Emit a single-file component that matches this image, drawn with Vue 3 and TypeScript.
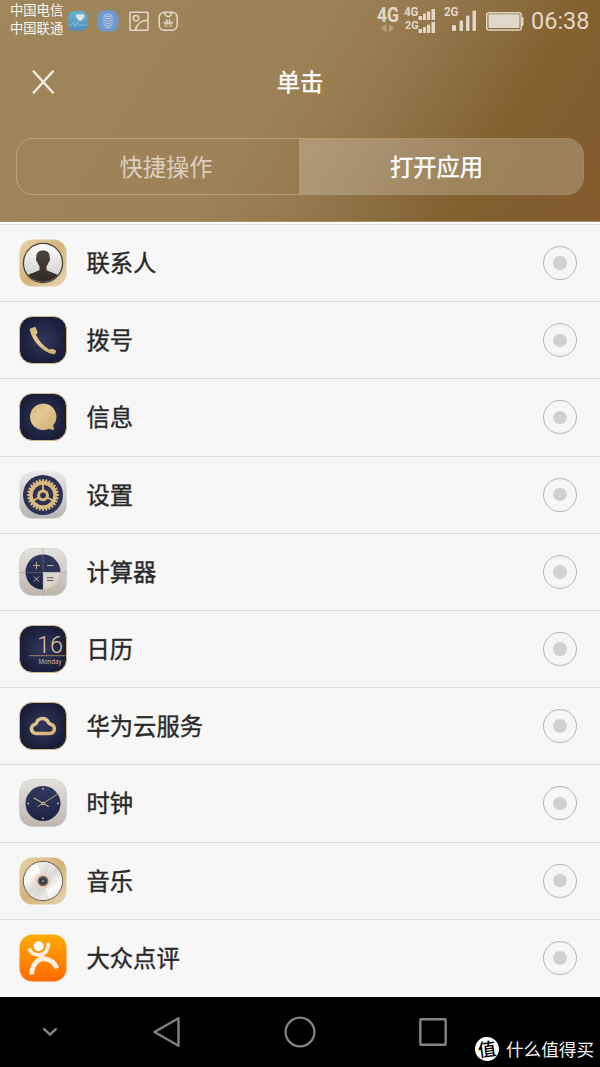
<script setup lang="ts">
import { ref, computed } from 'vue'

type IconName =
  | 'contacts'
  | 'phone'
  | 'message'
  | 'settings'
  | 'calculator'
  | 'calendar'
  | 'cloud'
  | 'clock'
  | 'music'
  | 'dianping'

interface AppItem {
  icon: IconName
  label: string
}

const tabs = ['快捷操作', '打开应用']
const activeTab = ref(1)
const selected = ref<IconName | null>(null)

const apps: AppItem[] = [
  { icon: 'contacts', label: '联系人' },
  { icon: 'phone', label: '拨号' },
  { icon: 'message', label: '信息' },
  { icon: 'settings', label: '设置' },
  { icon: 'calculator', label: '计算器' },
  { icon: 'calendar', label: '日历' },
  { icon: 'cloud', label: '华为云服务' },
  { icon: 'clock', label: '时钟' },
  { icon: 'music', label: '音乐' },
  { icon: 'dianping', label: '大众点评' }
]

// background tile of each icon
const tiles: Record<IconName, string> = {
  contacts: 'gold',
  phone: 'navy',
  message: 'navy',
  settings: 'silver',
  calculator: 'stone',
  calendar: 'navy',
  cloud: 'navy',
  clock: 'stone',
  music: 'gold',
  dianping: 'orange'
}

// gear outline, 28 teeth
const gearPath = computed(() => {
  const teeth = 28
  const points: string[] = []
  for (let i = 0; i < teeth; i++) {
    const base = (i / teeth) * Math.PI * 2
    const steps: [number, number][] = [
      [-0.08, 14],
      [-0.06, 15.9],
      [0.06, 15.9],
      [0.08, 14]
    ]
    for (const [offset, r] of steps) {
      const x = 24 + Math.cos(base + offset) * r
      const y = 24 + Math.sin(base + offset) * r
      points.push(`${x.toFixed(2)} ${y.toFixed(2)}`)
    }
  }
  return `M${points.join('L')}Z`
})
</script>

<template>
  <div class="screen">
    <!-- shared gradients -->
    <svg class="defs" width="0" height="0">
      <defs>
        <linearGradient id="gold" x1="0" y1="0" x2="1" y2="1">
          <stop offset="0" stop-color="#e8d3ab" />
          <stop offset="0.5" stop-color="#d3b57a" />
          <stop offset="1" stop-color="#e9d5b2" />
        </linearGradient>
        <radialGradient id="navy">
          <stop offset="0" stop-color="#30365a" />
          <stop offset="0.55" stop-color="#252a4b" />
          <stop offset="1" stop-color="#191d38" />
        </radialGradient>
        <linearGradient id="silver" x1="0" y1="0" x2="0" y2="1">
          <stop offset="0" stop-color="#e8e8e8" />
          <stop offset="1" stop-color="#b5b5b5" />
        </linearGradient>
        <linearGradient id="stone" x1="0" y1="0" x2="0" y2="1">
          <stop offset="0" stop-color="#e3e2dc" />
          <stop offset="1" stop-color="#bdb6af" />
        </linearGradient>
        <linearGradient id="orange" x1="0" y1="0" x2="0" y2="1">
          <stop offset="0" stop-color="#ffab02" />
          <stop offset="1" stop-color="#ff6900" />
        </linearGradient>
        <linearGradient id="goldInk" x1="0" y1="0" x2="1" y2="1">
          <stop offset="0" stop-color="#d8b87c" />
          <stop offset="0.4" stop-color="#e3c993" />
          <stop offset="1" stop-color="#cfac70" />
        </linearGradient>
        <linearGradient id="face" x1="0" y1="0" x2="0" y2="1">
          <stop offset="0" stop-color="#323a60" />
          <stop offset="1" stop-color="#1d2242" />
        </linearGradient>
        <linearGradient id="portrait" x1="0" y1="0" x2="0" y2="1">
          <stop offset="0" stop-color="#fff" />
          <stop offset="1" stop-color="#c9c9c9" />
        </linearGradient>
        <linearGradient id="body" x1="0" y1="0" x2="0" y2="1">
          <stop offset="0" stop-color="#4b453e" />
          <stop offset="1" stop-color="#2e2721" />
        </linearGradient>
        <linearGradient id="disc" x1="0.1" y1="0" x2="0.9" y2="1">
          <stop offset="0" stop-color="#e9e8e4" />
          <stop offset="0.25" stop-color="#fdfdfb" />
          <stop offset="0.5" stop-color="#dad8d3" />
          <stop offset="0.75" stop-color="#fbfbf9" />
          <stop offset="1" stop-color="#dddcd8" />
        </linearGradient>
        <linearGradient id="health" x1="0" y1="0" x2="0" y2="1">
          <stop offset="0" stop-color="#5fb4d3" />
          <stop offset="1" stop-color="#5689b9" />
        </linearGradient>
        <clipPath id="portraitClip"><circle cx="24" cy="24" r="19" /></clipPath>
      </defs>
    </svg>

    <header class="header">
      <div class="status">
        <div class="carriers">
          <span>中国电信</span>
          <span>中国联通</span>
        </div>
        <div class="notices">
          <svg width="20" height="20" viewBox="0 0 20 20">
            <rect x="0.5" y="0" width="19" height="20" rx="6" fill="url(#health)" />
            <path d="M12.2 10.2C9.2 8 7.900 6.600 8.100 4.900c.2-2.100 2.900-2.500 4.100-.8 1.200-1.700 3.900-1.300 4.100.8.2 1.700-1.100 3.100-4.100 5.300Z" fill="#e6e4da" />
            <path d="M0.500 14h3.500l1.500-2.500 2 4.500 1.800-5.500 2 5 1.500-1.500h6.500" fill="none" stroke="#8cc8e2" stroke-width="0.800" />
          </svg>
          <svg width="22" height="22" viewBox="0 0 22 22">
            <rect x="0.500" y="0.500" width="21" height="21" rx="7" fill="#6f97d0" />
            <g fill="none" stroke="#b9cbe0" stroke-width="1">
              <path d="M7 5.500q4-2.600 8 0M6 7.700q5 2.400 10 0M5.700 10q5.300 2.400 10.600 0M5.700 12.300q5.300 2.400 10.600 0M6.500 14.600q4.500 2.200 9 0M8 16.800q3 1.500 6 0M7.300 6q3.700 2 7.400 0" />
            </g>
          </svg>
          <svg width="20" height="20" viewBox="0 0 20 20" fill="none" stroke="#e2d8ca" stroke-width="1.500">
            <rect x="1" y="1.200" width="18" height="18" rx="0.500" />
            <circle cx="7" cy="7.200" r="2.700" />
            <path d="M6.500 19Q8 10 19 9" />
          </svg>
          <svg width="20" height="20" viewBox="0 0 20 20" fill="none" stroke="#e2d8ca" stroke-width="1.500">
            <rect x="1.200" y="1.200" width="18" height="18" rx="5" />
            <path d="M6.700 1.700q.7 4 3.500 4t3.500-4" />
            <g fill="#e2d8ca" stroke="none">
              <ellipse cx="9" cy="10.800" rx="1" ry="2.800" transform="rotate(-10 9 10.800)" />
              <ellipse cx="11.400" cy="10.800" rx="1" ry="2.800" transform="rotate(10 11.400 10.800)" />
              <ellipse cx="7" cy="12" rx="0.900" ry="2.200" transform="rotate(-38 7 12)" />
              <ellipse cx="13.400" cy="12" rx="0.900" ry="2.200" transform="rotate(38 13.400 12)" />
              <rect x="6.400" y="14.400" width="3" height="1" />
              <rect x="11" y="14.400" width="3" height="1" />
            </g>
          </svg>
        </div>

        <svg class="signals" width="150" height="36" viewBox="375 0 150 36">
          <g fill="#e2d8ca" font-weight="700">
            <text x="377" y="22" font-size="20" textLength="22" lengthAdjust="spacingAndGlyphs">4G</text>
            <text x="404" y="16" font-size="12" textLength="14.500" lengthAdjust="spacingAndGlyphs">4G</text>
            <text x="405" y="29" font-size="11" textLength="13.500" lengthAdjust="spacingAndGlyphs">2G</text>
            <text x="444" y="16" font-size="12" textLength="14.500" lengthAdjust="spacingAndGlyphs">2G</text>
          </g>
          <path d="M386.500 24v8.500l-5.500-4.200ZM389 24v8.500l5.500-4.200Z" fill="#b59f7d" />
          <g fill="#e2d8ca">
            <path d="M418.500 16h3.500v4h-3.500ZM423 13.500h3v6.500h-3ZM427 11.500h3.200v8.500h-3.200ZM431.500 9h3.500v11h-3.500Z" />
            <path d="M418.500 29h3.500v4h-3.500ZM423 27h3v6h-3ZM427 24.800h3.200v8.200h-3.200ZM431.500 22h3.500v11h-3.500Z" />
            <rect x="452" y="25" width="4" height="6" rx="1" />
            <rect x="459.500" y="20.500" width="3.500" height="10.500" rx="1" />
            <rect x="466" y="15.500" width="3.500" height="15.500" rx="1" />
            <rect x="472.500" y="10.500" width="3.500" height="20.500" rx="1" />
            <rect x="488.500" y="14.300" width="31" height="13.700" rx="0.500" />
            <rect x="521" y="17" width="2.500" height="9" rx="1" />
          </g>
          <rect x="486.700" y="12.700" width="34.500" height="17.300" rx="2" fill="none" stroke="#e2d8ca" stroke-width="1.500" />
        </svg>
        <span class="time">06:38</span>
      </div>

      <div class="titlebar">
        <button type="button" class="close" aria-label="关闭">
          <svg width="24" height="26" viewBox="0 0 24 26" stroke="#f3ece3" stroke-width="2.500" stroke-linecap="round">
            <path d="M2.700 2.500 21.800 23.500M21.800 2.500 2.700 23.500" />
          </svg>
        </button>
        <h1 class="title">单击</h1>
      </div>

      <div class="tabs">
        <button
          v-for="(tab, i) in tabs"
          :key="tab"
          type="button"
          class="tab"
          :class="{ 'tab--active': activeTab === i }"
          @click="activeTab = i"
        >
          {{ tab }}
        </button>
      </div>
    </header>

    <ul class="list">
      <li v-for="app in apps" :key="app.icon" class="row" @click="selected = app.icon">
        <svg class="icon" width="48" height="48" viewBox="0 0 48 48">
          <rect
            x="0.500"
            y="0.500"
            width="47"
            height="47"
            rx="13"
            :fill="`url(#${tiles[app.icon]})`"
            :class="`tile tile--${tiles[app.icon]}`"
          />

          <g v-if="app.icon === 'contacts'">
            <circle cx="24" cy="24" r="19.600" fill="url(#portrait)" stroke="#4a4338" stroke-width="1.300" />
            <path
              clip-path="url(#portraitClip)"
              d="M24 11.500c-5 0-7 3-6.700 7.500-.8.300-.2 3.600.9 4 .6 2 1.600 3.300 2.300 4.200v3.800C17 33.500 10.500 34 6 38.500V48h36v-9.500C37.500 34 31 33.500 27.500 31v-3.800c.7-.9 1.700-2.200 2.300-4.200 1.100-.4 1.700-3.700.9-4 .3-4.500-1.700-7.500-6.700-7.500Z"
              fill="url(#body)"
            />
          </g>

          <path
            v-else-if="app.icon === 'phone'"
            d="M11.200 12.600 15.600 11Q16.500 10.800 16.800 11.800L18.500 16.300Q18.600 17.200 17.800 17.800L16.900 18.500C19.500 24.500 24 29.500 30.500 33.700L31.700 33Q32.300 32.600 33.100 32.800L36.300 33.900Q37.300 34.300 37 35.300L36.200 37.700Q35.800 38.500 34.500 38.300C24 36 13.500 26 10.800 13.700Q10.700 12.900 11.200 12.600Z"
            fill="url(#goldInk)"
          />

          <path
            v-else-if="app.icon === 'message'"
            d="M24 10.500a13.300 13.300 0 1 0 6 25.300q2.500 1.200 5.500.7-1.500-2-1.200-4.200A13.300 13.300 0 0 0 24 10.500Z"
            fill="url(#goldInk)"
          />

          <g v-else-if="app.icon === 'settings'">
            <circle cx="24" cy="24" r="20" fill="#2c3253" />
            <path :d="gearPath" fill="#d8b87c" />
            <circle cx="24" cy="24" r="10.300" fill="#2c3253" />
            <path d="M24 24V12M24 24 13.500 30M24 24 34.500 30" stroke="#d8b87c" stroke-width="1.900" />
            <circle cx="24" cy="24.300" r="5.900" fill="#d8b87c" />
            <circle cx="24" cy="24.300" r="2.900" fill="#2c3253" />
          </g>

          <g v-else-if="app.icon === 'calculator'" fill="none">
            <path d="M24 24V6.500A17.500 17.500 0 1 0 24 41.500Z" fill="url(#face)" />
            <path d="M24 24V6.500A17.500 17.500 0 0 1 41.500 24Z" fill="#2e3457" />
            <path d="M24 24H41.500A17.500 17.500 0 0 1 24 41.500Z" fill="#dad7d1" />
            <path d="M41.300 25A17.500 17.500 0 0 1 25 41.300" stroke="#dfc48e" stroke-width="1.100" />
            <path d="M24 0V48M0 24.500H48" stroke="#8d8a87" stroke-opacity="0.600" stroke-width="0.700" />
            <path d="M14 17.500h7M17.500 14v7M28 17.500h6.500M15 28.500l5 5M20 28.500l-5 5" stroke="#c4ac8a" stroke-width="1" />
            <path d="M28 29.700h6.500M28 32.500h6.500" stroke="#665549" stroke-width="1.100" />
          </g>

          <g v-else-if="app.icon === 'calendar'" fill="#dbc299">
            <text class="cal-day" x="18" y="27.500" font-size="23.500" textLength="26" lengthAdjust="spacingAndGlyphs">16</text>
            <rect x="10" y="30.200" width="37" height="1" fill="#9b835b" />
            <text class="cal-week" x="19.500" y="38.600" font-size="6.500" textLength="23" lengthAdjust="spacingAndGlyphs">Monday</text>
          </g>

          <path
            v-else-if="app.icon === 'cloud'"
            d="M17 31.500a4.700 4.700 0 0 1-.8-9.300c.8-.2 1.100-.7 1.400-1.500a6.300 6.300 0 0 1 11.700-.4c.5 1.100 1.200 1.700 2.300 1.900a4.700 4.700 0 0 1-.6 9.300Z"
            fill="none"
            stroke="url(#goldInk)"
            stroke-width="3.600"
          />

          <g v-else-if="app.icon === 'clock'">
            <circle cx="24" cy="24.500" r="17.500" fill="url(#face)" />
            <g stroke="#c8b184" stroke-linecap="round">
              <path d="M19 27.500 38 15.500" stroke-width="0.900" />
              <path d="M15 19 29.500 27.500" stroke-width="1.100" />
            </g>
            <g fill="#d8c194">
              <circle cx="24" cy="24.500" r="1.800" />
              <circle cx="24" cy="9.700" r="0.900" />
              <circle cx="24" cy="39.300" r="0.900" />
              <circle cx="9.200" cy="24.500" r="0.900" />
              <circle cx="38.800" cy="24.500" r="0.900" />
            </g>
            <circle cx="24" cy="24.500" r="0.700" fill="#20243f" />
          </g>

          <g v-else-if="app.icon === 'music'">
            <circle cx="24" cy="24" r="19.700" fill="url(#disc)" stroke="#6d6048" stroke-width="1" />
            <path d="M24 24 18 5.900A19 19 0 0 1 32 6.800Z M24 24 30 42.100A19 19 0 0 1 14 40Z" fill="#a5a4a0" opacity="0.200" />
            <circle cx="24" cy="24" r="8" fill="#ead5bd" />
            <circle cx="24" cy="24" r="5.300" fill="#6b6765" />
            <circle cx="24" cy="24" r="3.600" fill="#37383c" />
            <circle cx="24" cy="24" r="1.400" fill="#85878b" />
          </g>

          <g v-else fill="none" stroke="#fbeee2">
            <circle cx="19.700" cy="12.200" r="5" fill="#fff" stroke="none" />
            <path d="M10 14.500C12.500 19.500 17 21.500 21.500 20.800C26.500 20 29.500 15.500 29.300 8.800" stroke-width="3.700" />
            <path d="M12.700 40.500C13 31 18.500 24.300 26 24.800C32 25.300 35.500 29 38 34.200" stroke-width="4.800" />
            <path d="M21 21.500Q23.500 22.500 23.500 25" stroke-width="5" />
          </g>
        </svg>

        <span class="label">{{ app.label }}</span>
        <span class="radio" :class="{ 'radio--on': selected === app.icon }" />
      </li>
    </ul>

    <nav class="nav">
      <svg width="16" height="10" viewBox="0 0 16 10">
        <path d="M2.200 2.200 8 7.600 13.800 2.200" stroke-width="2.500" stroke-linecap="round" />
      </svg>
      <svg class="nav__back" width="28" height="32" viewBox="0 0 28 32">
        <path d="M26.500 2.300V29.700L2.500 16Z" stroke-width="2.400" stroke-linejoin="round" />
      </svg>
      <svg class="nav__home" width="32" height="32" viewBox="0 0 32 32">
        <circle cx="16" cy="16" r="14.400" stroke-width="2.300" />
      </svg>
      <svg class="nav__recent" width="28" height="28" viewBox="0 0 28 28">
        <rect x="1.300" y="1.300" width="25.400" height="25.400" rx="1" stroke-width="2.400" />
      </svg>
      <div class="watermark">
        <span class="watermark__logo">值</span>
        <span>什么值得买</span>
      </div>
    </nav>
  </div>
</template>

<style>
body {
  background: #f7f7f7;
}
</style>

<style scoped>
.screen {
  width: 600px;
  height: 1067px;
  display: flex;
  flex-direction: column;
  overflow: hidden;
  background: #f7f7f7;
  font-family: "Noto Sans CJK SC", "Noto Sans", sans-serif;
}

.defs {
  position: absolute;
}

.header {
  box-sizing: border-box;
  height: 222px;
  flex: none;
  background: linear-gradient(122deg, #9f865b 0%, #9c8256 45%, #977b4f 56%, #8d6f42 67%, #83612f 79%, #815d2d 90%, #855c2d 100%);
  border-bottom: 1px solid #a98e69;
}

.status {
  height: 42px;
  display: flex;
  align-items: flex-start;
  padding-left: 10px;
}

.carriers {
  width: 58px;
  display: flex;
  flex-direction: column;
  font-size: 13.3px;
  line-height: 18px;
  color: #fbf7f0;
  margin-top: 1px;
  white-space: nowrap;
}

.notices {
  display: flex;
  align-items: center;
  gap: 9.3px;
  height: 41px;
}

.signals {
  margin-left: auto;
  font-family: Roboto, sans-serif;
}

.time {
  width: 69px;
  padding-left: 6px;
  font-family: Roboto, sans-serif;
  font-size: 23.5px;
  line-height: 43px;
  color: #e2d8ca;
}

.titlebar {
  height: 80px;
  display: grid;
  grid-template-columns: 86px 1fr 86px;
  align-items: center;
}

.close {
  display: flex;
  justify-content: center;
  padding: 0;
  border: none;
  background: transparent;
}

.title {
  margin: 0;
  padding-bottom: 2px;
  text-align: center;
  font-size: 23.3px;
  font-weight: 400;
  line-height: 34px;
  color: #fff;
  -webkit-text-stroke: 0.4px #fff;
}

.tabs {
  box-sizing: border-box;
  height: 57px;
  margin: 16px 16px 0;
  display: grid;
  grid-template-columns: 282px 1fr;
  border: 1px solid rgba(255, 255, 255, 0.26);
  border-radius: 17px;
  overflow: hidden;
}

.tab {
  padding: 0 0 1px 16px;
  border: none;
  background: transparent;
  font-family: inherit;
  font-size: 23.3px;
  color: #dccfbd;
}

.tab--active {
  padding: 0 9px 1px 0;
  background: rgba(255, 255, 255, 0.22);
  color: #fff;
  -webkit-text-stroke: 0.4px #fff;
}

.list {
  list-style: none;
  margin: 0;
  padding: 0;
  border-top: 2px solid #fdfdfd;
}

.row {
  box-sizing: border-box;
  height: 77.2px;
  display: flex;
  align-items: center;
  padding: 0 23px 0 19px;
  border-top: 1px solid #dedede;
}

.row:last-child {
  height: 78.2px;
  padding-bottom: 1px;
}

.icon {
  flex: none;
}

.tile--navy {
  stroke: #d3b985;
  stroke-width: 1;
}

.tile--stone {
  stroke: #c9c8c4;
  stroke-width: 0.6;
}

.cal-day {
  font-family: Roboto, sans-serif;
  font-weight: 300;
}

.cal-week {
  font-family: "Open Sans", sans-serif;
}

.label {
  flex: 1;
  margin-left: 19.5px;
  padding-bottom: 2px;
  font-size: 23.3px;
  line-height: 34px;
  color: #292929;
  -webkit-text-stroke: 0.4px #292929;
}

.radio {
  box-sizing: border-box;
  width: 34px;
  height: 34px;
  border: 1.4px solid #b3b3b3;
  border-radius: 50%;
  display: flex;
  align-items: center;
  justify-content: center;
}

.radio::before {
  content: '';
  width: 13.5px;
  height: 13.5px;
  border-radius: 50%;
  background: #d1d1d1;
}

.radio--on::before {
  background: #a07c3f;
}

.nav {
  position: relative;
  flex: 1;
  display: flex;
  align-items: center;
  padding-left: 42px;
  background: #000;
}

.nav > svg {
  fill: none;
  stroke: #838383;
}

.nav__back {
  margin-left: 94px;
}

.nav__home {
  margin-left: 104px;
}

.nav__recent {
  margin-left: 103px;
}

/* overlaid on the right corner of the navigation bar */
.watermark {
  position: absolute;
  right: 6px;
  bottom: 5px;
  display: flex;
  align-items: center;
  gap: 7px;
  font-size: 17.6px;
  line-height: 26px;
  color: #f2f2f2;
}

.watermark__logo {
  width: 24px;
  height: 24px;
  border-radius: 50%;
  background: #fff;
  color: #000;
  font-size: 18px;
  font-weight: 500;
  line-height: 23px;
  text-align: center;
  transform: rotate(-8deg);
}
</style>
